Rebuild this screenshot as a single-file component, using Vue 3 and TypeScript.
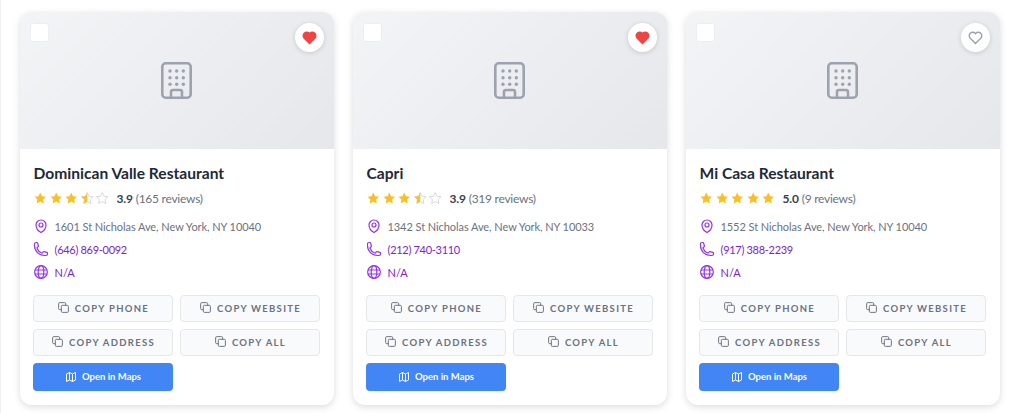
<template>
  <div class="page">
    <div class="grid">
      <div class="card" v-for="place in places" :key="place.name">
        <div class="photo">
          <span class="check"></span>
          <button class="fav">
            <svg viewBox="0 0 24 24" class="heart" :class="{ on: place.liked }">
              <path d="M12 20.500 4.600 13.100a4.900 4.900 0 0 1 0-7 4.900 4.900 0 0 1 7 0l.4.5.4-.5a4.900 4.900 0 0 1 7 0 4.900 4.900 0 0 1 0 7z" />
            </svg>
          </button>
          <svg class="building" viewBox="0 0 31 37" fill="none">
            <rect x="1.300" y="1.300" width="28.400" height="34.400" rx="3.500" stroke="#9ca3af" stroke-width="2.600" />
            <g fill="#9ca3af">
              <circle v-for="d in dots" :key="d[0] + '-' + d[1]" :cx="d[0]" :cy="d[1]" r="1.700" />
            </g>
            <path d="M10 35v-5a2 2 0 0 1 2-2h7a2 2 0 0 1 2 2v5" stroke="#9ca3af" stroke-width="2.600" />
          </svg>
        </div>
        <div class="body">
          <h3 class="name">{{ place.name }}</h3>
          <div class="rating">
            <span class="stars">
              <svg v-for="n in 5" :key="n" viewBox="0 0 24 24" class="star">
                <defs>
                  <clipPath :id="clipId(place.name)"><rect x="0" y="0" width="12" height="24" /></clipPath>
                </defs>
                <path :d="starPath" :class="starClass(n, place.score)" />
                <path v-if="isHalf(n, place.score)" :d="starPath" class="full" :clip-path="`url(#${clipId(place.name)})`" />
              </svg>
            </span>
            <b class="score">{{ place.score.toFixed(1) }}</b>
            <span class="count">({{ place.reviews }} reviews)</span>
          </div>
          <div class="info">
            <div class="row">
              <svg viewBox="0 0 24 24" class="ico"><path d="M15 10.500a3 3 0 1 1-6 0 3 3 0 0 1 6 0Z" /><path d="M19.500 10.500c0 7.142-7.500 11.250-7.500 11.250S4.500 17.642 4.500 10.500a7.500 7.500 0 1 1 15 0Z" /></svg>
              <span class="addr">{{ place.address }}</span>
            </div>
            <div class="row">
              <svg viewBox="0 0 24 24" class="ico"><path d="M2.250 6.750c0 8.284 6.716 15 15 15h2.250a2.250 2.250 0 0 0 2.250-2.250v-1.372c0-.516-.351-.966-.852-1.091l-4.423-1.106c-.44-.11-.902.055-1.173.417l-.97 1.293c-.282.376-.769.542-1.210.38a12.035 12.035 0 0 1-7.143-7.143c-.162-.441.004-.928.38-1.210l1.293-.97c.363-.271.527-.734.417-1.173L6.963 3.102a1.125 1.125 0 0 0-1.091-.852H4.500A2.250 2.250 0 0 0 2.250 4.500v2.250Z" /></svg>
              <span class="link phone">{{ place.phone }}</span>
            </div>
            <div class="row">
              <svg viewBox="0 0 24 24" class="ico"><circle cx="12" cy="12" r="9.500" /><ellipse cx="12" cy="12" rx="4.200" ry="9.500" /><path d="M2.800 9h18.400M2.800 15h18.400" /></svg>
              <span class="link">N/A</span>
            </div>
          </div>
          <div class="actions">
            <button class="copy" v-for="label in copyLabels" :key="label">
              <svg viewBox="0 0 24 24" class="copy-ico"><rect x="8" y="8" width="13" height="13" rx="2" /><path d="M16 8V5a2 2 0 0 0-2-2H5a2 2 0 0 0-2 2v9a2 2 0 0 0 2 2h3" /></svg>
              {{ label }}
            </button>
            <button class="maps">
              <svg viewBox="0 0 24 24" class="map-ico"><path d="M3 6l6-3 6 3 6-3v15l-6 3-6-3-6 3zM9 3v15M15 6v15" /></svg>
              Open in Maps
            </button>
          </div>
        </div>
      </div>
    </div>
  </div>
</template>

<script setup lang="ts">
const starPath = 'M12 2.500l2.900 6.100 6.600.9-4.800 4.600 1.200 6.600L12 17.500l-5.900 3.200 1.200-6.600L2.500 9.500l6.600-.9z'

const places = [
  { name: 'Dominican Valle Restaurant', score: 3.9, reviews: 165, address: '1601 St Nicholas Ave, New York, NY 10040', phone: '(646) 869-0092', liked: true },
  { name: 'Capri', score: 3.9, reviews: 319, address: '1342 St Nicholas Ave, New York, NY 10033', phone: '(212) 740-3110', liked: true },
  { name: 'Mi Casa Restaurant', score: 5.0, reviews: 9, address: '1552 St Nicholas Ave, New York, NY 10040', phone: '(917) 388-2239', liked: false }
]

const copyLabels = ['COPY PHONE', 'COPY WEBSITE', 'COPY ADDRESS', 'COPY ALL']

const dots: number[][] = []
for (const y of [9, 15.700, 22.300]) {
  for (const x of [9, 15.700, 22.300]) dots.push([x, y])
}

const clipId = (name: string) => 'half-' + name.replace(/\s/g, '')
const isHalf = (n: number, score: number) => n === Math.ceil(score) && score % 1 !== 0
const starClass = (n: number, score: number) => (n <= Math.floor(score) ? 'full' : 'empty')
</script>

<style>
html, body { margin: 0; background: #fff; overflow: hidden; }
</style>

<style scoped>
.page {
  height: 413px;
  box-sizing: border-box;
  padding: 12px 24px 0 19px;
  font-family: Lato, "Liberation Sans", sans-serif;
  border-left: 1px solid #f0f0f0;
}
.grid {
  display: grid;
  grid-template-columns: repeat(3, 314px);
  gap: 19px;
}
.card {
  height: 393px;
  background: #fff;
  border-radius: 12px;
  box-shadow: 0 2px 7px rgba(0, 0, 0, 0.14);
  overflow: hidden;
}
.photo {
  position: relative;
  height: 137px;
  display: flex;
  align-items: center;
  justify-content: center;
  background: linear-gradient(135deg, #f3f4f6, #e5e7eb);
}
.check {
  position: absolute;
  top: 11px;
  left: 10px;
  width: 17px;
  height: 17px;
  background: #fff;
  border: 1px solid #eceef1;
  border-radius: 3px;
}
.fav {
  position: absolute;
  top: 11px;
  right: 10px;
  width: 29px;
  height: 29px;
  padding: 0;
  border: none;
  border-radius: 50%;
  background: #fff;
  box-shadow: 0 1px 5px rgba(0, 0, 0, 0.15);
  display: flex;
  align-items: center;
  justify-content: center;
}
.heart {
  width: 17px;
  height: 17px;
  fill: none;
  stroke: #9ca3af;
  stroke-width: 2;
}
.heart.on {
  fill: #ef4444;
  stroke: #ef4444;
}
.building {
  width: 31px;
  height: 37px;
  margin-left: -1px;
}
.body {
  padding: 14px 13px 0;
}
.name {
  margin: 0 0 0 .5px;
  font-size: 15.600px;
  line-height: 20px;
  font-weight: 700;
  color: #1f2937;
}
.rating {
  display: flex;
  align-items: center;
  height: 18px;
  margin-top: 6px;
  font-size: 12px;
}
.stars {
  display: flex;
  gap: 1px;
  margin-right: 7px;
}
.star {
  width: 14.500px;
  height: 14.500px;
}
.full { fill: #fbbf24; }
.empty {
  fill: none;
  stroke: #d1d5db;
  stroke-width: 1.500;
}
.score {
  color: #374151;
  margin-right: 3px;
  letter-spacing: -.2px;
}
.count {
  color: #6b7280;
  letter-spacing: -.25px;
}
.info {
  display: flex;
  flex-direction: column;
  gap: 4.500px;
  margin-top: 10px;
  font-size: 11px;
}
.row {
  display: flex;
  align-items: center;
  gap: 5.500px;
  height: 18.500px;
}
.ico {
  width: 16px;
  height: 16px;
  flex: none;
  fill: none;
  stroke: #9333ea;
  stroke-width: 1.800;
  stroke-linejoin: round;
}
.addr {
  color: #6b7280;
  letter-spacing: -.07px;
}
.link { color: #7e22ce; }
.phone { letter-spacing: -.3px; }
.actions {
  display: grid;
  grid-template-columns: 140px 140px;
  gap: 7px;
  margin-top: 13px;
}
.copy {
  height: 27px;
  padding: 0;
  display: flex;
  align-items: center;
  justify-content: center;
  gap: 5px;
  background: #f9fafb;
  border: 1px solid #e5e7eb;
  border-radius: 4px;
  color: #6b7280;
  font-family: inherit;
  font-size: 9.500px;
  font-weight: 700;
  letter-spacing: 1.300px;
}
.copy-ico {
  width: 13px;
  height: 13px;
  margin-top: -2px;
  fill: none;
  stroke: #6b7280;
  stroke-width: 1.800;
}
.maps {
  height: 28px;
  padding: 0;
  display: flex;
  align-items: center;
  justify-content: center;
  gap: 5px;
  background: #4285f4;
  border: none;
  border-radius: 4px;
  color: #fff;
  font-family: inherit;
  font-size: 9.500px;
  font-weight: 700;
}
.map-ico {
  width: 12px;
  height: 12px;
  fill: none;
  stroke: #fff;
  stroke-width: 2;
  stroke-linejoin: round;
}
</style>
